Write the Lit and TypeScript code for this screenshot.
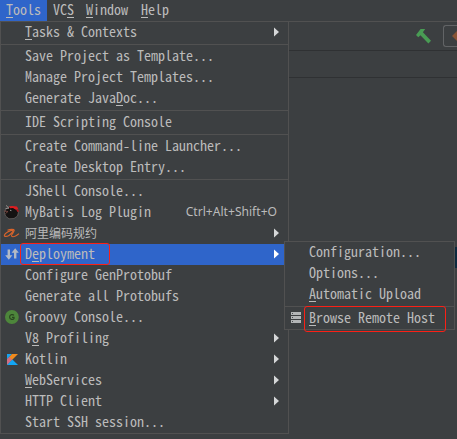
import { LitElement, html, css, svg, nothing } from "lit";
import { customElement, property } from "lit/decorators.js";

interface Item {
  label: string;
  key?: number;
  icon?: string;
  arrow?: boolean;
  shortcut?: string;
  selected?: boolean;
  marked?: string;
  cjk?: boolean;
}
type Entry = Item | null;

const MAIN: Entry[] = [
  { label: "Tasks & Contexts", key: 0, arrow: true },
  null,
  { label: "Save Project as Template..." },
  { label: "Manage Project Templates..." },
  { label: "Generate JavaDoc...", key: 13 },
  null,
  { label: "IDE Scripting Console" },
  null,
  { label: "Create Command-line Launcher..." },
  { label: "Create Desktop Entry..." },
  null,
  { label: "JShell Console..." },
  { label: "MyBatis Log Plugin", icon: "mybatis", shortcut: "Ctrl+Alt+Shift+O" },
  { label: "阿里编码规约", icon: "alibaba", arrow: true, cjk: true },
  { label: "Deployment", key: 1, icon: "deploy", arrow: true, selected: true, marked: "deployment" },
  { label: "Configure GenProtobuf" },
  { label: "Generate all Protobufs" },
  { label: "Groovy Console...", icon: "groovy" },
  { label: "V8 Profiling", key: 1, arrow: true },
  { label: "Kotlin", icon: "kotlin", arrow: true },
  { label: "WebServices", key: 0, arrow: true },
  { label: "HTTP Client", arrow: true },
  { label: "Start SSH session..." },
];

const SUB: Entry[] = [
  { label: "Configuration..." },
  { label: "Options..." },
  { label: "Automatic Upload", key: 0 },
  null,
  { label: "Browse Remote Host", key: 0, icon: "host", marked: "browse" },
];

const ICONS: Record<string, unknown> = {
  mybatis: svg`
    <path d="M6 7 L9 4.5 L13 5 L16 7 L18.5 10 L17.5 14 L14 16.5 L9 16.8 L5.5 14 L4.5 10.5 Z" fill="#141212" stroke="#77706e" stroke-width=".6"/>
    <path d="M9 4.6 L12 4 L17 4.4 L18.5 7.6 L15.5 7.4 L13 6 L10 6.2 Z" fill="#df1d20"/>
    <path d="M16 7 L19.5 9 L17.5 10 Z" fill="#b41519"/>
    <path d="M6 3.4 L9 6.2 L5.5 6.6" fill="none" stroke="#aaa3a0" stroke-width=".8"/>
    <path d="M4 9 L8 9.5 L5.5 11.5" fill="none" stroke="#7d4a43" stroke-width=".8"/>
    <path d="M10 8.2 L11.4 8.6" stroke="#c9c4c2" stroke-width=".8"/>`,
  alibaba: svg`
    <path d="M7.5 7.2 C10 6.2 13.8 5.8 14.2 7.2 C14.5 8.8 10.6 12 11.6 13.2 C12.6 14.2 16 13 19 10.6" fill="none" stroke="#d9642b" stroke-width="1.2"/>
    <path d="M13.4 7.2 C9.5 7.2 4.9 10.1 4.4 12.2 C4.1 14 7 13.7 9 12.4 C11 11.2 12.2 9.6 13.6 7.6" fill="none" stroke="#d9642b" stroke-width="1.2"/>`,
  deploy: svg`
    <path d="M7.6 5.5 H10 V11.2 H12.4 L8.8 15.8 L5.2 11.2 H7.6 Z" fill="#b3bac5"/>
    <path d="M14 14.5 H16.4 V8.8 H18.8 L15.2 4.2 L11.6 8.8 H14 Z" fill="#b3bac5"/>`,
  groovy: svg`
    <circle cx="11.9" cy="10" r="6.9" fill="#4d863b"/>
    <path d="M13.9 8.4 C13.2 7.3 9.7 7.1 9.6 10 C9.6 12.9 13.4 12.8 14 11.5 V10.3 H12" fill="none" stroke="#29451f" stroke-width="1.2"/>`,
  kotlin: svg`
    <path d="M7 5 H12 L7 10.5 Z" fill="#16a4f2"/>
    <path d="M12 5 H18 L7 16 V10.5 Z" fill="#f08a1d"/>
    <path d="M7 10.3 L9.5 7.7 L12 11 L7 16 Z" fill="#cf6d83"/>
    <path d="M7 16 L12.4 10.5 L18 16 Z" fill="#12a5f4"/>`,
  host: svg`
    <path d="M7 4 H17 V7 H7 Z M7 8 H17 V11 H7 Z M7 12 H17 V15 H7 Z" fill="#b3b5b6"/>
    <path d="M8 5 H9 V6 H8 Z M8 9 H9 V10 H8 Z M8 13 H9 V14 H8 Z" fill="#494c4e"/>`,
};

function mnemonic(label: string, key?: number) {
  return key === undefined
    ? label
    : html`${label.slice(0, key)}<span class="key">${label[key]}</span>${label.slice(key + 1)}`;
}

const keyStyle = css`
  .key {
    text-decoration: underline;
    text-decoration-thickness: 1px;
    text-underline-offset: 2px;
    text-decoration-skip-ink: none;
  }
`;

@customElement("popup-menu")
class PopupMenu extends LitElement {
  @property({ attribute: false }) entries: Entry[] = [];

  static styles = [
    keyStyle,
    css`
      :host {
        display: flex;
        flex-direction: column;
        box-sizing: border-box;
        border: 1px solid #515151;
        background: #3c3f41;
      }
      .sep {
        height: 3px;
        background: linear-gradient(#515151, #515151) 0 1px / 100% 1px no-repeat;
      }
      .row {
        display: flex;
        height: 21px;
        line-height: 19px;
        position: relative;
        white-space: pre;
      }
      .selected { background: #2f65ca; z-index: 1; }
      .gutter { width: 24px; flex: none; }
      .icon { display: block; width: 24px; height: 21px; margin-left: -1px; }
      .label { flex: 1; }
      .cjk { font-size: 12px; line-height: 20px; }
      .shortcut {
        font: 12.1px/20px "Noto Sans", sans-serif;
        margin-right: 11px;
      }
      .arrow { width: 5px; height: 21px; flex: none; margin-right: 9px; fill: #d5d7d8; }
      .selected .arrow { fill: #fff; }
      .mark {
        position: absolute;
        box-sizing: border-box;
        border: 1px solid #fb2016;
        border-radius: 3px;
      }
      .deployment { left: 19px; top: -1px; width: 90px; height: 22px; }
      .browse { left: 19px; top: -2px; width: 142px; height: 26px; }
    `,
  ];

  render() {
    return this.entries.map((e) =>
      e === null
        ? html`<div class="sep"></div>`
        : html`<div class="row ${e.selected ? "selected" : ""}">
            <div class="gutter">${e.icon
              ? html`<svg class="icon" viewBox="0 0 24 21">${ICONS[e.icon]}</svg>`
              : nothing}</div>
            <div class="label ${e.cjk ? "cjk" : ""}">${mnemonic(e.label, e.key)}</div>
            ${e.shortcut ? html`<div class="shortcut">${e.shortcut}</div>` : nothing}
            ${e.arrow
              ? html`<svg class="arrow" viewBox="0 0 5 21"><path d="M0 5.5 L5 10 L0 14.5 Z"/></svg>`
              : nothing}
            ${e.marked ? html`<div class="mark ${e.marked}"></div>` : nothing}
          </div>`
    );
  }
}

@customElement("app-root")
class AppRoot extends LitElement {
  static styles = [
    keyStyle,
    css`
      :host {
        display: block;
        position: relative;
        width: 457px;
        height: 439px;
        overflow: hidden;
        background: #3c3f41;
        color: #bbbbbb;
        font: 14px/21px "Noto Sans Mono CJK SC", "Noto Sans CJK SC", "Liberation Mono", monospace;
      }
      .bar { display: flex; height: 21px; line-height: 18px; }
      .menu { padding: 0 6px; white-space: pre; }
      .menu.open { background: #2f65ca; }
      .menu:last-child { padding-left: 7px; }
      .tools {
        display: flex;
        justify-content: flex-end;
        height: 30px;
        box-sizing: border-box;
        border-top: 1px solid #515151;
        border-bottom: 1px solid #2f3133;
      }
      .hammer { width: 16px; height: 16px; margin: 6px 12px 0 0; }
      .config {
        width: 14px;
        height: 22px;
        box-sizing: border-box;
        margin-top: 3px;
        border: 1px solid #626466;
        border-right: 0;
        border-radius: 3px 0 0 3px;
        overflow: hidden;
      }
      .config svg { display: block; width: 13px; height: 20px; }
      .crumbs { height: 27px; box-sizing: border-box; border-bottom: 1px solid #2f3133; }
      .edge { margin: 169px 0 0 auto; width: 2px; height: 21px; background: #0d293e; }
      .main { position: absolute; left: 0; top: 21px; width: 289px; }
      .sub { position: absolute; left: 284px; top: 241px; width: 171px; z-index: 2; }
    `,
  ];

  render() {
    return html`
      <div class="bar">
        <div class="menu open">${mnemonic("Tools", 0)}</div>
        <div class="menu">${mnemonic("VCS", 2)}</div>
        <div class="menu">${mnemonic("Window", 0)}</div>
        <div class="menu">${mnemonic("Help", 0)}</div>
      </div>
      <div class="tools">
        <svg class="hammer" viewBox="0 0 16 16">
          <path d="M1 7 L5.6 1 H10.2 L7.9 4.2 L16 12.8 L13.4 15.4 L5.4 7.2 L3.3 9.2 Z" fill="#499c54"/>
        </svg>
        <div class="config"><svg viewBox="0 0 13 20"><path d="M8 10 L13 5 V15 Z" fill="#875335"/></svg></div>
      </div>
      <div class="crumbs"></div>
      <div class="edge"></div>
      <popup-menu class="main" .entries=${MAIN}></popup-menu>
      <popup-menu class="sub" .entries=${SUB}></popup-menu>
    `;
  }
}
